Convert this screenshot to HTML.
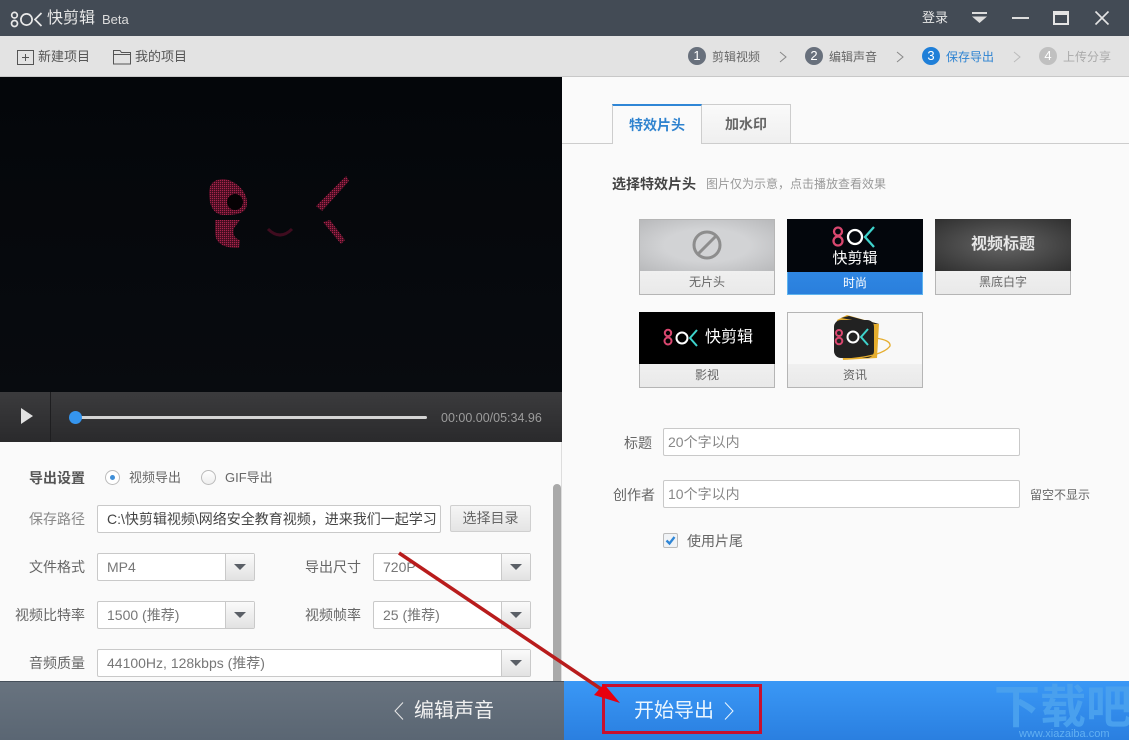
<!DOCTYPE html>
<html lang="zh"><head><meta charset="utf-8"><title>快剪辑</title>
<style>
*{box-sizing:border-box}
html,body{margin:0;padding:0;width:1129px;height:740px;overflow:hidden;background:#fafafa}
body{position:relative;font-family:"Liberation Sans","Noto Sans CJK SC","WenQuanYi Zen Hei",sans-serif;font-size:13px;color:#666}
.a{position:absolute}
.t{position:absolute;white-space:nowrap;line-height:18px}
.r{text-align:right}
.num{position:absolute;width:18px;height:18px;border-radius:50%;background:#68707c;color:#fff;font-size:13px;line-height:18px;text-align:center}
.inp{position:absolute;background:#fff;border:1px solid #c9c9c9;border-radius:2px;color:#777;font-size:14px;padding-left:9px;white-space:nowrap;overflow:hidden}
.dd{position:absolute;height:28px;background:#fff;border:1px solid #c9c9c9;border-radius:2px;color:#777;font-size:14px;line-height:26px;padding-left:9px;white-space:nowrap}
.dd i{position:absolute;right:0;top:0;width:29px;height:26px;border-left:1px solid #c9c9c9;background:linear-gradient(#fafafa,#e2e2e2)}
.dd i:after{content:"";position:absolute;left:8px;top:10px;border:6px solid transparent;border-top:6px solid #5a5f66;border-bottom:0}
.card{position:absolute;width:136px;height:76px;border:1px solid #b5b5b5;background:linear-gradient(#fff,#e9e9e9)}
.card .im{position:absolute;left:-1px;top:-1px;width:136px;height:52px;overflow:hidden}
.card .cap{position:absolute;left:0;right:0;top:51px;height:23px;line-height:23px;text-align:center;font-size:12px;color:#666}
</style></head>
<body>
<!-- title bar -->
<div class="a" style="left:0;top:0;width:1129px;height:36px;background:#434b55"></div>
<svg class="a" style="left:10px;top:10px" width="36" height="20" viewBox="0 0 36 20" fill="none" stroke="#e8e8e8" stroke-width="1.700"><circle cx="4.500" cy="5.200" r="2.800"/><circle cx="4.500" cy="13.500" r="3"/><circle cx="16.500" cy="9.500" r="5.600"/><path d="M31.500 3L25 9.500L31.500 16"/></svg>
<div class="t" style="left:47px;top:9px;font-size:16px;color:#e8e8e8;line-height:20px">快剪辑</div>
<div class="t" style="left:102px;top:11px;font-size:13px;color:#dcdcdc">Beta</div>
<div class="t" style="left:922px;top:9px;font-size:13px;color:#e6e6e6">登录</div>
<svg class="a" style="left:970px;top:10px" width="19" height="16" viewBox="0 0 19 16"><rect x="2" y="2" width="15" height="2" fill="#ddd"/><path d="M2 6.500H17L9.500 13Z" fill="#ddd"/></svg>
<div class="a" style="left:1012px;top:17px;width:17px;height:2px;background:#ddd"></div>
<div class="a" style="left:1053px;top:11px;width:16px;height:14px;border:2px solid #e4e4e4;border-top-width:4px"></div>
<svg class="a" style="left:1094px;top:10px" width="16" height="16" viewBox="0 0 16 16" stroke="#e4e4e4" stroke-width="1.600"><path d="M1.500 1.500L14.500 14.500M14.500 1.500L1.500 14.500"/></svg>

<!-- toolbar -->
<div class="a" style="left:0;top:36px;width:1129px;height:41px;background:#e3e3e3;border-bottom:1px solid #c8c8c8"></div>
<svg class="a" style="left:17px;top:50px" width="17" height="15" viewBox="0 0 17 15" fill="none" stroke="#555"><rect x=".5" y=".5" width="16" height="14"/><path d="M5 7.500H12M8.500 4V11"/></svg>
<div class="t" style="left:38px;top:48px;font-size:13px;color:#555">新建项目</div>
<svg class="a" style="left:113px;top:49px" width="18" height="16" viewBox="0 0 18 16" fill="none" stroke="#555"><path d="M.5 15V1.500H7L8.500 3.500H17.500V15ZM.5 5.500H17.500"/></svg>
<div class="t" style="left:135px;top:48px;font-size:13px;color:#555">我的项目</div>

<div class="num" style="left:688px;top:47px">1</div>
<div class="t" style="left:712px;top:48px;font-size:12px;color:#666">剪辑视频</div>
<svg class="a" style="left:778px;top:50px" width="10" height="14" fill="none" stroke="#888"><path d="M2 2L8 7L2 12"/></svg>
<div class="num" style="left:805px;top:47px">2</div>
<div class="t" style="left:829px;top:48px;font-size:12px;color:#666">编辑声音</div>
<svg class="a" style="left:895px;top:50px" width="10" height="14" fill="none" stroke="#888"><path d="M2 2L8 7L2 12"/></svg>
<div class="num" style="left:922px;top:47px;background:#1f7fd8">3</div>
<div class="t" style="left:946px;top:48px;font-size:12px;color:#2d83d2">保存导出</div>
<svg class="a" style="left:1012px;top:50px" width="10" height="14" fill="none" stroke="#bbb"><path d="M2 2L8 7L2 12"/></svg>
<div class="num" style="left:1039px;top:47px;background:#c0c0c0">4</div>
<div class="t" style="left:1063px;top:48px;font-size:12px;color:#aaa">上传分享</div>

<!-- video -->
<svg class="a" style="left:0;top:77px" width="562" height="315" viewBox="0 77 562 315">
<defs><pattern id="dots" width="2" height="2" patternUnits="userSpaceOnUse"><rect width="2" height="2" fill="#3c0a1c"/><rect width="1.200" height="1.200" fill="#a8244c"/></pattern>
<linearGradient id="vbg" x1="0" y1="0" x2="0" y2="1"><stop offset="0" stop-color="#04060a"/><stop offset="1" stop-color="#080b0f"/></linearGradient></defs>
<rect x="0" y="77" width="562" height="315" fill="url(#vbg)"/>
<path d="M209 193C209 182 216 179 224 179C234 180 247 190 247 203C247 214 236 215 224 215C214 215 209 206 209 193Z" fill="url(#dots)"/>
<circle cx="235" cy="202" r="8" fill="#060204"/>
<path d="M215 220H240L234 228C232 234 235 239 240 240L239 248C226 248 215 245 215 232Z" fill="url(#dots)"/>
<path d="M316 206L346 176L349 181L322 211Z" fill="url(#dots)"/>
<path d="M323 222L330 220L345 240L341 244Z" fill="url(#dots)"/>
<path d="M268 229Q280 241 292 229" fill="none" stroke="#3f0c1f" stroke-width="3"/>
</svg>

<!-- player controls -->
<div class="a" style="left:0;top:392px;width:562px;height:50px;background:linear-gradient(#3b3b3d,#2a2a2c)"></div>
<div class="a" style="left:50px;top:392px;width:1px;height:50px;background:#1e1e20"></div>
<svg class="a" style="left:20px;top:408px" width="14" height="16"><path d="M1 0L13 8L1 16Z" fill="#e2e2e2"/></svg>
<div class="a" style="left:75px;top:416px;width:352px;height:3px;background:#d4d4d4;border-radius:2px"></div>
<div class="a" style="left:69px;top:411px;width:13px;height:13px;border-radius:50%;background:#3595ee"></div>
<div class="t" style="left:441px;top:409px;font-size:12.500px;color:#9c9c9c">00:00.00/05:34.96</div>

<!-- left settings -->
<div class="a" style="left:0;top:442px;width:562px;height:239px;background:#fafafa;border-right:1px solid #ddd"></div>
<div class="t" style="left:29px;top:469px;font-size:14px;font-weight:bold;color:#555">导出设置</div>
<div class="a" style="left:105px;top:470px;width:15px;height:15px;border-radius:50%;border:1px solid #bbb;background:#fff"></div>
<div class="a" style="left:110px;top:475px;width:5px;height:5px;border-radius:50%;background:#3f8fd8"></div>
<div class="t" style="left:129px;top:469px;font-size:13px;color:#666">视频导出</div>
<div class="a" style="left:201px;top:470px;width:15px;height:15px;border-radius:50%;border:1px solid #bbb;background:linear-gradient(#fff,#eee)"></div>
<div class="t" style="left:225px;top:469px;font-size:13px;color:#666">GIF导出</div>

<div class="t r" style="left:0;width:85px;top:510px;color:#888;font-size:14px">保存路径</div>
<div class="inp" style="left:97px;top:505px;width:344px;height:28px;line-height:26px;color:#444;font-size:14px">C:\快剪辑视频\网络安全教育视频，进来我们一起学习</div>
<div class="a" style="left:450px;top:505px;width:81px;height:27px;border:1px solid #cfcfcf;border-radius:2px;background:linear-gradient(#f5f5f5,#e4e4e4);text-align:center;line-height:25px;font-size:14px;color:#666">选择目录</div>

<div class="t r" style="left:0;width:85px;top:558px;font-size:14px">文件格式</div>
<div class="dd" style="left:97px;top:553px;width:158px">MP4<i></i></div>
<div class="t r" style="left:275px;width:86px;top:558px;font-size:14px">导出尺寸</div>
<div class="dd" style="left:373px;top:553px;width:158px">720P<i></i></div>
<div class="t r" style="left:0;width:85px;top:606px;font-size:14px">视频比特率</div>
<div class="dd" style="left:97px;top:601px;width:158px">1500 (推荐)<i></i></div>
<div class="t r" style="left:275px;width:86px;top:606px;font-size:14px">视频帧率</div>
<div class="dd" style="left:373px;top:601px;width:158px">25 (推荐)<i></i></div>
<div class="t r" style="left:0;width:85px;top:654px;font-size:14px">音频质量</div>
<div class="dd" style="left:97px;top:649px;width:434px">44100Hz, 128kbps (推荐)<i></i></div>
<div class="a" style="left:553px;top:484px;width:8px;height:197px;background:#a9a9a9;border-radius:4px 4px 0 0"></div>

<!-- right panel -->
<div class="a" style="left:562px;top:77px;width:567px;height:604px;background:#fafafa"></div>
<div class="a" style="left:562px;top:143px;width:567px;height:1px;background:#cdcdcd"></div>
<div class="a" style="left:612px;top:104px;width:90px;height:40px;background:#fafafa;border:1px solid #cdcdcd;border-top:2px solid #2f86d6;border-bottom:0;text-align:center;line-height:38px;font-size:14px;font-weight:bold;color:#2f83cf">特效片头</div>
<div class="a" style="left:702px;top:104px;width:89px;height:39px;background:linear-gradient(#fafafa,#efefef);border:1px solid #cdcdcd;border-left:0;border-bottom:0;text-align:center;line-height:38px;font-size:14px;font-weight:bold;color:#666">加水印</div>
<div class="t" style="left:612px;top:175px;font-size:14px;font-weight:bold;color:#444">选择特效片头</div>
<div class="t" style="left:706px;top:175px;font-size:12px;color:#999">图片仅为示意，点击播放查看效果</div>

<div class="card" style="left:639px;top:219px"><div class="im" style="left:0;top:0;width:134px;height:51px;background:radial-gradient(ellipse at center,#d2d3d5 45%,#b8b9bb 100%)">
<svg width="134" height="51"><circle cx="67" cy="25" r="13" fill="none" stroke="#8d8d8d" stroke-width="3"/><path d="M58 34L76 16" stroke="#8d8d8d" stroke-width="3"/></svg></div><div class="cap">无片头</div></div>

<div class="card" style="left:787px;top:219px;border-color:#5fb4ee;background:linear-gradient(#3a97f2,#2a7fdc)"><div class="im" style="background:#03060c;height:53px">
<svg class="a" style="left:44px;top:5px" width="48" height="28" fill="none" stroke-width="2.300"><circle cx="7" cy="7.500" r="4" stroke="#d9476f"/><circle cx="7" cy="17" r="4.500" stroke="#d9476f"/><circle cx="24" cy="13" r="7" stroke="#fff"/><path d="M43 3L34 13L43 23" stroke="#3ed3cc"/></svg>
<div class="t" style="left:0;width:136px;top:30px;text-align:center;color:#fff;font-size:15px;line-height:20px">快剪辑</div></div><div class="cap" style="top:52px;color:#fff">时尚</div></div>

<div class="card" style="left:935px;top:219px"><div class="im" style="background:radial-gradient(ellipse at center,#5a5a5a 20%,#2f2f2f 100%)"><div class="t" style="left:0;width:136px;top:16px;text-align:center;color:#e6e6e6;font-size:16px;font-weight:bold;line-height:20px">视频标题</div></div><div class="cap">黑底白字</div></div>

<div class="card" style="left:639px;top:312px"><div class="im" style="background:#000">
<svg class="a" style="left:24px;top:16px" width="38" height="20" fill="none" stroke-width="2"><circle cx="5" cy="5" r="3.200" stroke="#d9476f"/><circle cx="5" cy="13" r="3.500" stroke="#d9476f"/><circle cx="19" cy="10" r="5.500" stroke="#fff"/><path d="M34 2L27 10L34 18" stroke="#3ed3cc"/></svg>
<div class="t" style="left:66px;top:16px;color:#fff;font-size:16px;line-height:20px">快剪辑</div></div><div class="cap">影视</div></div>

<div class="card" style="left:787px;top:312px"><div class="im" style="left:0;top:0;width:134px;height:51px;background:#f8f8f8">
<svg width="134" height="51" fill="none"><path d="M49 7L59 2L91 11L89 45L55 47Z" fill="#e5ad2e"/><path d="M53 5L61 3L91 11L87 11Z" fill="#222"/><rect x="46" y="7" width="40" height="38" rx="7" fill="#222"/><circle cx="51" cy="20" r="3" stroke="#d9476f" stroke-width="2"/><circle cx="51" cy="28" r="3.300" stroke="#d9476f" stroke-width="2"/><circle cx="65" cy="24" r="5.500" stroke="#fff" stroke-width="2"/><path d="M80 16L73 24L80 32" stroke="#3ed3cc" stroke-width="2"/><path d="M87 25Q103 27 102 33Q95 43 59 46" stroke="#e5ad2e" stroke-width="1.300"/></svg></div><div class="cap">资讯</div></div>

<div class="t r" style="left:600px;width:52px;top:434px;font-size:14px">标题</div>
<div class="inp" style="left:663px;top:428px;width:357px;height:28px;line-height:27px;color:#888;font-size:14px;padding-left:4px">20个字以内</div>
<div class="t r" style="left:600px;width:55px;top:486px;font-size:14px">创作者</div>
<div class="inp" style="left:663px;top:480px;width:357px;height:28px;line-height:27px;color:#888;font-size:14px;padding-left:4px">10个字以内</div>
<div class="t" style="left:1030px;top:486px;font-size:12px;color:#666">留空不显示</div>
<div class="a" style="left:663px;top:533px;width:15px;height:15px;border:1px solid #bbb;border-radius:2px;background:#f0f3f6"></div>
<svg class="a" style="left:664px;top:534px" width="13" height="13" fill="none" stroke="#2f86d6" stroke-width="2.300"><path d="M2.500 6.500L5.500 9.500L10.500 3"/></svg>
<div class="t" style="left:687px;top:532px;font-size:14px;color:#666">使用片尾</div>

<!-- bottom bar -->
<div class="a" style="left:0;top:681px;width:564px;height:59px;background:linear-gradient(#68737f,#5a6673);border-top:1px solid #46505b"></div>
<div class="a" style="left:564px;top:681px;width:565px;height:59px;background:linear-gradient(#3a98f6,#2a7fe0)"></div>
<svg class="a" style="left:393px;top:701px" width="12" height="20" fill="none" stroke="#e8e8e8"><path d="M10 1.500L2 10L10 18.500"/></svg>
<div class="t" style="left:414px;top:698px;font-size:20px;line-height:26px;color:#f0f0f0">编辑声音</div>
<div class="t" style="left:634px;top:698px;font-size:20px;line-height:26px;color:#eaf6ff">开始导出</div>
<svg class="a" style="left:723px;top:701px" width="12" height="20" fill="none" stroke="#eaf6ff"><path d="M2 1.500L10 10L2 18.500"/></svg>

<!-- watermark -->
<div class="t" style="left:994px;top:683px;font-size:46px;line-height:48px;font-weight:bold;color:#49a0ee;letter-spacing:0">下载吧</div>
<div class="t" style="left:1019px;top:729px;font-size:11px;line-height:11px;color:#62b0f2">www.xiazaiba.com</div>

<!-- red annotation -->
<div class="a" style="left:602px;top:684px;width:160px;height:50px;border:3px solid #c8102e"></div>
<svg class="a" style="left:0;top:0" width="1129" height="740" fill="none"><path d="M399 553L607 693" stroke="#b81c1c" stroke-width="3.500"/><path d="M620 703L594 695L604 684Z" fill="#e8000f"/></svg>
</body></html>
